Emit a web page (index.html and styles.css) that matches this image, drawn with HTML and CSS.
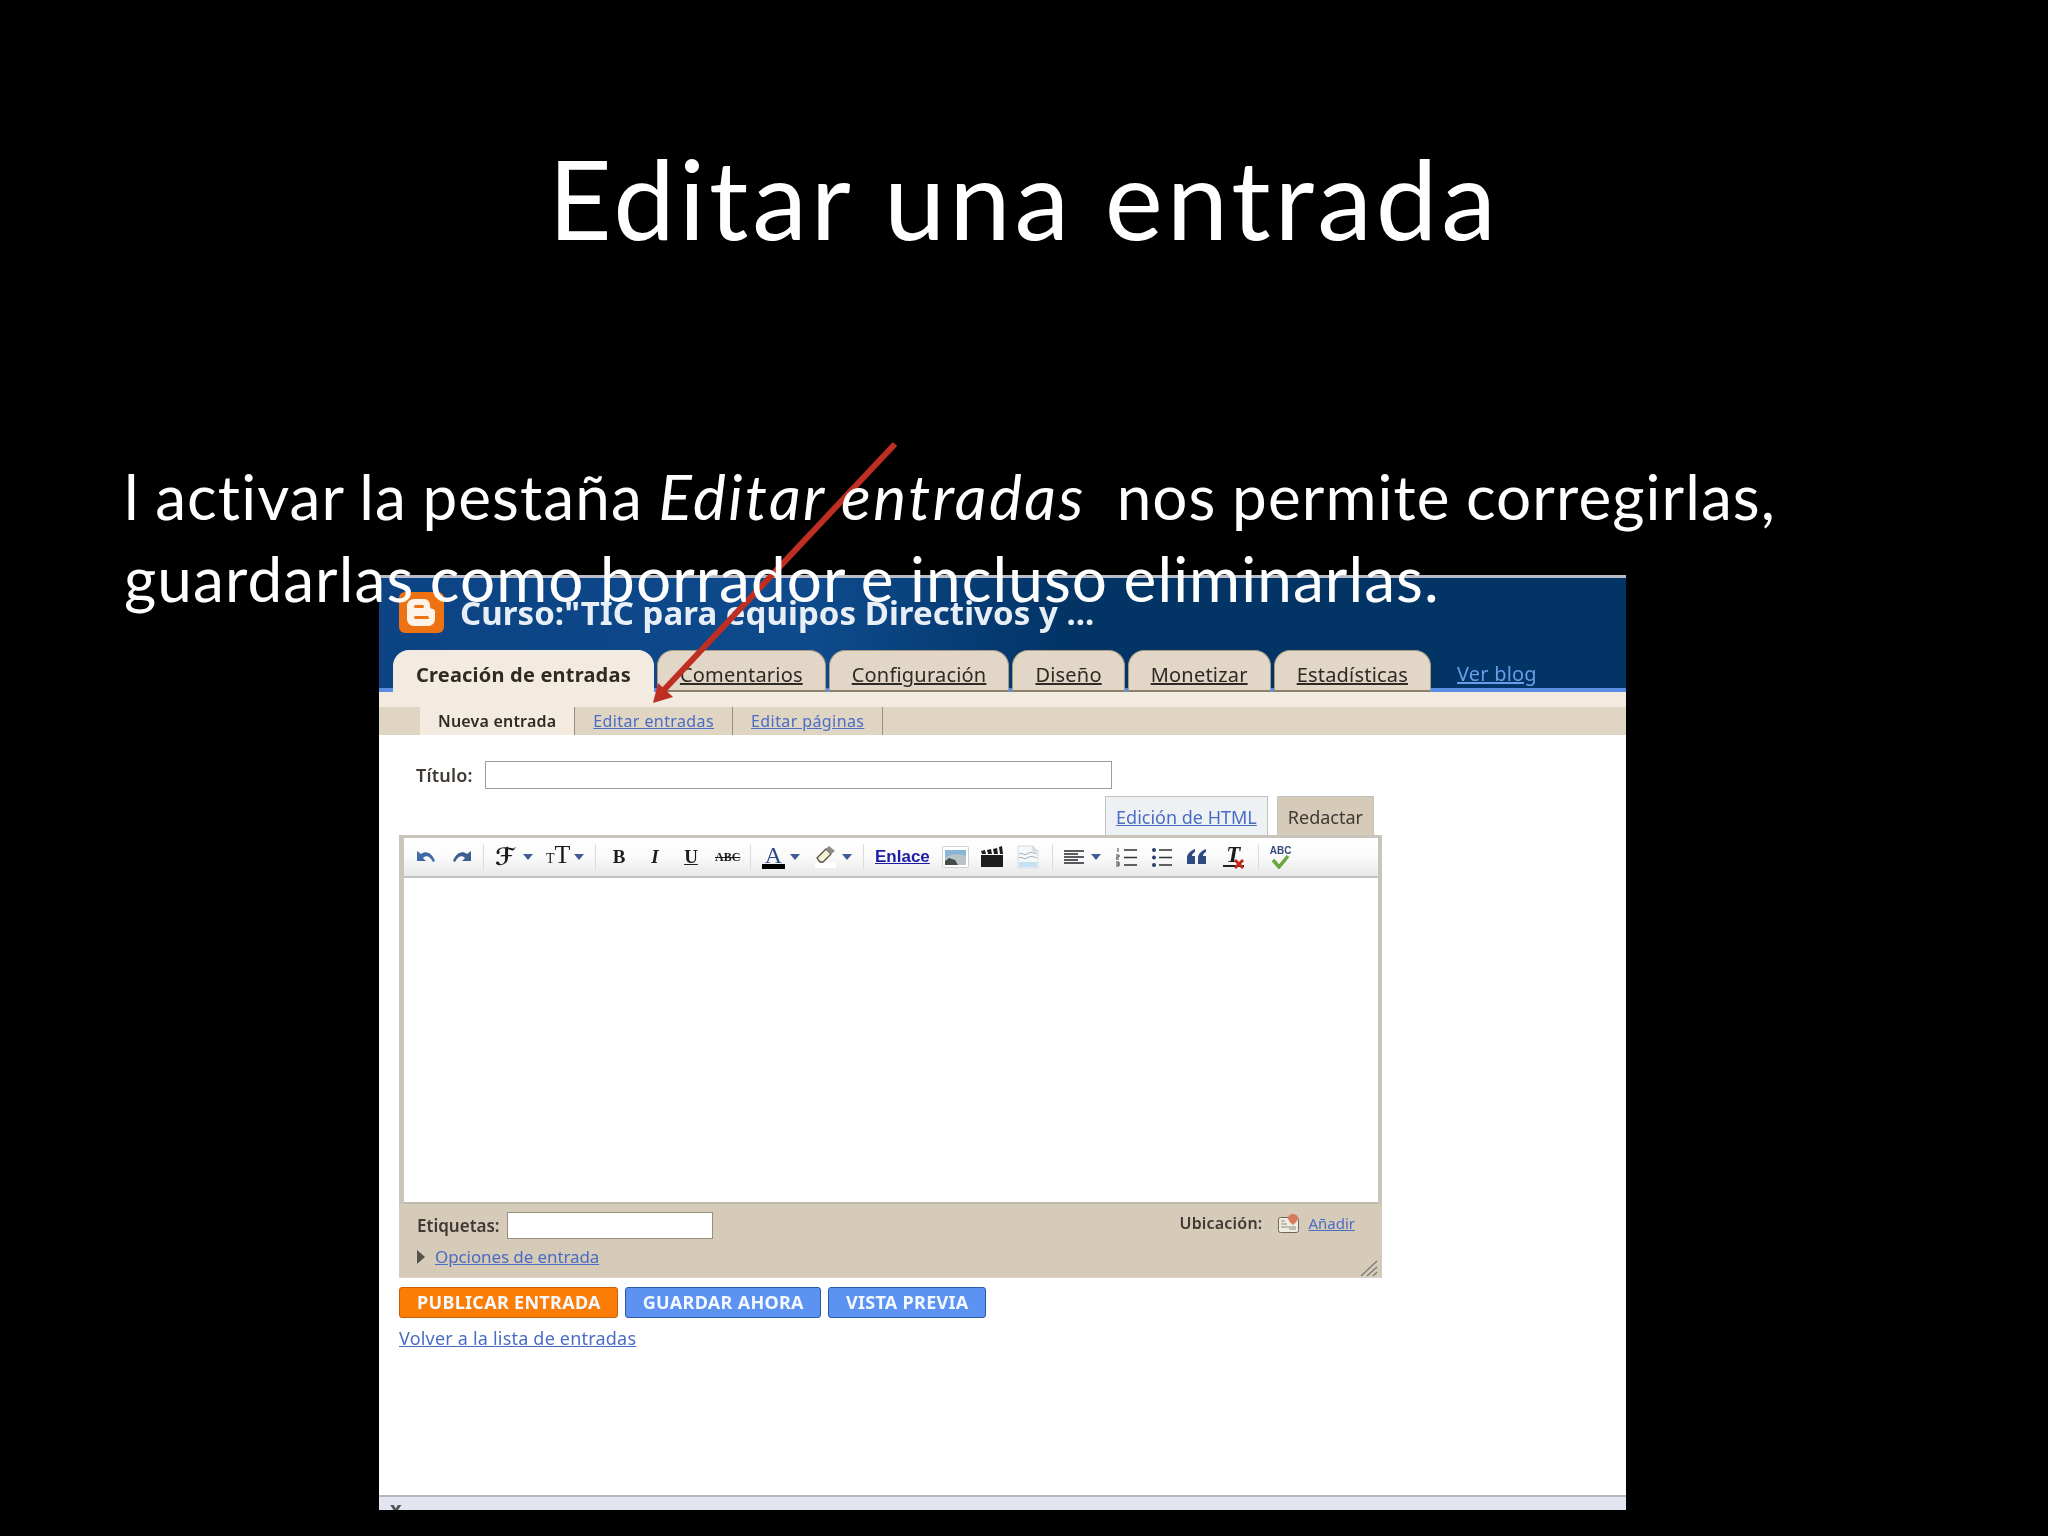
FILE: index.html
```html
<!doctype html>
<html lang="es">
  <head>
    <meta charset="utf-8">
    <title>Editar una entrada</title>
    <link rel="stylesheet" href="styles.css">
  </head>
  <body>
    <div class="slide">
      <h1 class="slideTitle">Editar una entrada</h1>
      <p class="slideText">l activar la pestaña <em>Editar entradas</em>&nbsp; nos permite corregirlas,<br>guardarlas como borrador e incluso eliminarlas.</p>

      <div class="window">
        <div class="masthead">
          <div class="brand">
            <svg class="logo" viewBox="0 0 45 41">
              <rect width="45" height="41" rx="6" fill="#ee7112"/>
              <path d="M15 7h10c4 0 6 3 6 7 0 2 1 3 3 3 1 0 2 1 2 3v7c0 4-3 7-7 7H15c-4 0-7-3-7-7V14c0-4 3-7 7-7z" fill="#fdf3e8"/>
              <rect x="15" y="13" width="10" height="3" rx="1.5" fill="#ee7112"/>
              <rect x="15" y="24" width="15" height="3" rx="1.5" fill="#ee7112"/>
            </svg>
            <span class="blogName">Curso:"TIC para equipos Directivos y ...</span>
          </div>
          <div class="tabs">
            <span class="tab active">Creación de entradas</span>
            <a class="tab">Comentarios</a>
            <a class="tab">Configuración</a>
            <a class="tab">Diseño</a>
            <a class="tab">Monetizar</a>
            <a class="tab">Estadísticas</a>
            <a class="viewBlog">Ver blog</a>
          </div>
        </div>

        <div class="subnav">
          <div class="subtabs">
            <span class="subtab current">Nueva entrada</span>
            <a class="subtab">Editar entradas</a>
            <a class="subtab">Editar páginas</a>
          </div>
        </div>

        <div class="compose">
          <div class="titleRow">
            <label class="fieldLabel titleLabel">Título:</label>
            <div class="titleInput"></div>
          </div>
          <div class="modeTabs">
            <a class="modeTab html">Edición de HTML</a>
            <span class="modeTab write">Redactar</span>
          </div>

          <div class="editor">
            <div class="toolbar">
              <div class="group gapUndo">
                <svg class="icon20" viewBox="0 0 20 14"><path d="M1 1v10h9L7 8c3-3 7-2 10 4l2-1C16 3 10 0 5 4z" fill="#3f6aa8"/></svg>
                <svg class="icon20" viewBox="0 0 20 14"><path d="M19 1v10h-9l3-3C10 5 6 6 3 12l-2-1C4 3 10 0 15 4z" fill="#3c5f8f"/></svg>
              </div>
              <i class="sep"></i>
              <div class="group gapFont">
                <div class="drop"><span class="glyph fontGlyph">ℱ</span><i class="caret"></i></div>
                <div class="drop"><span class="glyph sizeGlyph"><small>T</small>T</span><i class="caret"></i></div>
              </div>
              <i class="sep"></i>
              <div class="group gapStyle">
                <span class="glyph styleGlyph bold">B</span>
                <span class="glyph styleGlyph italic">I</span>
                <span class="glyph styleGlyph under">U</span>
                <span class="glyph styleGlyph strike">ABC</span>
              </div>
              <i class="sep"></i>
              <div class="group gapColor">
                <div class="drop tight"><span class="glyph colorGlyph">A</span><i class="caret"></i></div>
                <div class="drop tight">
                  <svg class="icon22" viewBox="0 0 22 22">
                    <path d="M2 12 11 3l5 5-8 8H5z" fill="#f3f4d8" stroke="#55524a" stroke-width="1.3"/>
                    <path d="M11 3l3-3 6 5-4 3z" fill="#8d8c88"/>
                    <rect y="17" width="21" height="5" fill="#fff"/>
                  </svg>
                  <i class="caret"></i>
                </div>
              </div>
              <i class="sep"></i>
              <div class="group gapInsert">
                <a class="linkBtn">Enlace</a>
                <span class="imageBtn">
                  <svg viewBox="0 0 21 15">
                    <rect width="21" height="15" fill="#88b4d6"/>
                    <path d="M0 8c5-4 12-5 21-2v9H0z" fill="#b8c4c6"/>
                    <path d="M0 11l4-3 6 2 3 5H0z" fill="#454b46"/>
                  </svg>
                </span>
                <svg class="icon22" viewBox="0 0 22 22">
                  <path d="M0 9h22v12H0z" fill="#1d1c1a"/>
                  <path d="M0 5l4-1 1 4H1zM6 4l4-1 1 5H7zM12 3l4-1 1 6h-4zM18 1l3-1 1 8h-3z" fill="#1d1c1a"/>
                </svg>
                <svg class="icon26" viewBox="0 0 26 24">
                  <path d="M3 1h15l5 5v17H3z" fill="#f6f9fb" stroke="#d6dce2"/>
                  <path d="M18 1v5h5" fill="#dfe6ec" stroke="#c6ced6"/>
                  <path d="M4 9c3-2 5 2 8 0s5-2 10 0M4 13c3-2 5 2 8 0s5-2 10 0" fill="none" stroke="#a4acb4"/>
                  <path d="M4 17h18v5H4z" fill="#c4e0f2"/>
                </svg>
              </div>
              <i class="sep"></i>
              <div class="group gapList">
                <div class="drop alignDrop">
                  <svg class="icon20" viewBox="0 0 20 15"><path d="M0 1h20M0 4h14M0 7h20M0 10h14M0 13h20" stroke="#25272b" stroke-width="1.6"/></svg>
                  <i class="caret"></i>
                </div>
                <svg class="icon21" viewBox="0 0 21 19">
                  <path d="M8 2h13M8 9.500h13M8 17h13" stroke="#2f3135" stroke-width="1.6"/>
                  <path d="M2 0v4M0 7h3v2H0v2h3M0 14h3v4H0M0 16h3" fill="none" stroke="#3a3c40"/>
                </svg>
                <svg class="icon20" viewBox="0 0 20 19">
                  <path d="M7 2h13M7 9.500h13M7 17h13" stroke="#2f3135" stroke-width="1.6"/>
                  <circle cx="2" cy="2" r="2" fill="#2c3f68"/><circle cx="2" cy="9.500" r="2" fill="#2c3f68"/><circle cx="2" cy="17" r="2" fill="#2c3f68"/>
                </svg>
                <svg class="icon20" viewBox="0 0 20 16">
                  <path d="M8 0C3 2 0 5 0 9v6h8V7H5c0-2 1-3 3-4zM19 0c-5 2-8 5-8 9v6h8V7h-3c0-2 1-3 3-4z" fill="#2e4a80"/>
                </svg>
                <span class="clearBtn">
                  <span class="glyph clearGlyph">T</span>
                  <svg class="clearX" viewBox="0 0 12 12"><path d="M2 2l8 8M10 2l-8 8" stroke="#c2261c" stroke-width="3"/></svg>
                </span>
              </div>
              <i class="sep"></i>
              <span class="spellBtn">
                <span class="spellText">ABC</span>
                <svg class="spellCheck" viewBox="0 0 20 16"><path d="M3 7l6 7L18 3" fill="none" stroke="#6aa83c" stroke-width="3.500"/></svg>
              </span>
            </div>
            <div class="editBody"></div>
          </div>

          <div class="editorFoot">
            <div class="footRow">
              <label class="fieldLabel">Etiquetas:</label>
              <div class="tagInput"></div>
              <div class="location">
                <span class="fieldLabel locLabel">Ubicación:</span>
                <svg class="mapIcon" viewBox="0 0 21 19">
                  <rect x=".5" y="3.500" width="20" height="15" rx="2" fill="#efece4" stroke="#6d675c"/>
                  <path d="M3 7h4M3 10h6M3 13h15M11 15h7" stroke="#8f8a7e"/>
                  <path d="M15 0c3 0 5 2 5 4 0 3-5 7-5 7s-5-4-5-7c0-2 2-4 5-4z" fill="#d9785a"/>
                </svg>
                <a class="link">Añadir</a>
              </div>
            </div>
            <div class="optionsRow"><i class="expander"></i><a class="link">Opciones de entrada</a></div>
            <svg class="grip" viewBox="0 0 18 17"><path d="M1 16 17 1M7 16 17 7M13 16l4-4" stroke="#7b7a76" stroke-width="1.300"/></svg>
          </div>

          <div class="actions">
            <a class="btn publish">PUBLICAR ENTRADA</a>
            <a class="btn save">GUARDAR AHORA</a>
            <a class="btn preview">VISTA PREVIA</a>
          </div>
          <a class="link backLink">Volver a la lista de entradas</a>
        </div>

        <div class="statusBar"><span class="closeMark">x</span></div>
      </div>

      <svg class="arrow" viewBox="0 0 2048 1536">
        <line x1="895" y1="444" x2="662" y2="692" stroke="#bf2e22" stroke-width="6"/>
        <polygon points="653,703 658,683 673,697" fill="#bf2e22"/>
      </svg>
    </div>
  </body>
</html>
```

FILE: styles.css
```css
html, body {
  margin: 0;
  background: #000;
}

.slide {
  position: relative;
  width: 2048px;
  height: 1536px;
  overflow: hidden;
  background: #000;
  color: #fff;
  font-family: Lato, "Open Sans", sans-serif;
  font-variant-ligatures: none;
}

.slideTitle {
  position: relative;
  z-index: 3;
  margin: 0;
  padding-top: 131px;
  font-size: 110px;
  line-height: 132px;
  font-weight: 400;
  text-align: center;
  letter-spacing: 3.8px;
}

.slideText {
  position: relative;
  z-index: 3;
  margin: 192px 0 0;
  padding-left: 124px;
  font-size: 62px;
  line-height: 82px;
  letter-spacing: 1.1px;
  word-spacing: -1.5px;
  white-space: nowrap;
}

.slideText em {
  letter-spacing: 2.5px;
}

.arrow {
  position: absolute;
  left: 0;
  top: 0;
  z-index: 2;
  width: 2048px;
  height: 1536px;
}

/* screenshot of the blog editor */
.window {
  position: absolute;
  left: 379px;
  top: 575px;
  z-index: 1;
  display: flex;
  flex-direction: column;
  width: 1247px;
  height: 935px;
  background: #fff;
  border-top: 3px solid #b9bdc9;
  box-sizing: border-box;
  color: #3a342c;
  font-family: "Noto Sans", sans-serif;
  font-size: 17px;
  filter: blur(0.5px);
}

a {
  cursor: pointer;
}

.link {
  color: #4a6cc4;
  text-decoration: underline;
}

.masthead {
  background:
    linear-gradient(#5a8ee4, #5a8ee4) left bottom / 100% 4px no-repeat,
    linear-gradient(90deg, #0c4384, #0e4a8c 35%, #023466 55%);
}

.brand {
  display: flex;
  gap: 16px;
  height: 72px;
  box-sizing: border-box;
  padding: 14px 0 0 20px;
}

.logo {
  width: 45px;
  height: 41px;
}

.blogName {
  margin-top: 3px;
  color: #e8eef6;
  font-size: 33px;
  line-height: 36px;
  font-weight: 700;
  letter-spacing: 0.05px;
}

.tabs {
  display: flex;
  gap: 3px;
  height: 42px;
  padding-left: 14px;
}

.tab {
  padding: 11px 22px 0;
  box-sizing: border-box;
  background: #e2d7c6;
  border: 1px solid #a89a84;
  border-bottom: 2px solid #8d7f6a;
  border-radius: 16px 16px 0 0;
  color: #2e2a24;
  font-size: 20px;
  line-height: 26px;
  letter-spacing: 0.2px;
  text-decoration: underline;
}

.tab.active {
  background: #f3ebe0;
  border-color: #f3ebe0;
  font-weight: 700;
  text-decoration: none;
}

.viewBlog {
  margin: 11px 0 0 23px;
  color: #6a9ce8;
  font-size: 20px;
  line-height: 26px;
  letter-spacing: 0.2px;
  text-decoration: underline;
}

.subnav {
  padding-top: 15px;
  background: #f3ebe0;
}

.subtabs {
  display: flex;
  height: 28px;
  padding-left: 41px;
  background: #e0d5c3;
}

.subtab {
  padding: 0 18px;
  border-right: 1px solid #9a8c76;
  color: #4a6cc4;
  font-size: 16px;
  line-height: 28px;
  letter-spacing: 0.4px;
  text-decoration: underline;
}

.subtab.current {
  background: #f3ebe0;
  color: #2e2a24;
  font-weight: 600;
  letter-spacing: 0.2px;
  text-decoration: none;
}

.compose {
  display: flex;
  flex-direction: column;
  padding: 26px 0 0 20px;
}

.titleRow {
  display: flex;
  align-items: center;
  gap: 12px;
  padding-left: 17px;
}

.fieldLabel {
  color: #3f3a33;
  font-size: 17px;
  font-weight: 600;
}

.titleLabel {
  font-size: 18px;
  letter-spacing: 0.2px;
}

.titleInput {
  width: 625px;
  height: 26px;
  background: #fff;
  border: 1px solid #9c9c9c;
}

.modeTabs {
  display: flex;
  justify-content: flex-end;
  gap: 9px;
  width: 975px;
  margin-top: 7px;
}

.modeTab {
  box-sizing: border-box;
  height: 40px;
  padding: 0 10px;
  border: 1px solid #c4c2bc;
  border-bottom: 0;
  font-size: 18px;
  line-height: 40px;
}

.modeTab.html {
  background: #eef1f4;
  color: #4a6cc4;
  text-decoration: underline;
}

.modeTab.write {
  background: #d6cab8;
  color: #3f3a33;
}

.editor {
  box-sizing: border-box;
  width: 983px;
  margin-top: -1px;
  background: #fff;
  border: solid #c9c5bb;
  border-width: 3px 4px 0 5px;
}

.toolbar {
  display: flex;
  align-items: center;
  height: 38px;
  padding-left: 12px;
  background: linear-gradient(#fff, #fafafa 50%, #e8e8e8);
  border-bottom: 2px solid #c2c2c2;
}

.group {
  display: flex;
  align-items: center;
}

.gapUndo { gap: 16px; }
.gapFont { gap: 13px; }
.gapStyle { gap: 12px; }
.gapColor { gap: 15px; }
.gapInsert { gap: 12px; }
.gapList { gap: 15px; }

.drop {
  display: flex;
  align-items: center;
  gap: 8px;
}

.drop.tight {
  gap: 5px;
}

.drop.alignDrop {
  gap: 7px;
}

.sep {
  width: 1px;
  height: 26px;
  margin: 0 11px;
  background: #dcdcdc;
}

.caret {
  width: 0;
  height: 0;
  border: 5px solid transparent;
  border-top: 6px solid #3f5a94;
  border-bottom: 0;
}

.icon20 { width: 20px; }
.icon21 { width: 21px; }
.icon22 { width: 22px; height: 22px; }
.icon26 { width: 26px; height: 24px; }

.glyph {
  font-family: "Liberation Serif", serif;
  color: #1c1c1c;
}

.fontGlyph {
  width: 20px;
  font-family: "DejaVu Sans", serif;
  font-size: 24px;
  line-height: 28px;
  font-weight: 700;
  text-align: center;
}

.sizeGlyph {
  width: 20px;
  font-size: 26px;
  line-height: 28px;
  white-space: nowrap;
}

.sizeGlyph small {
  font-size: 14px;
}

.styleGlyph {
  width: 24px;
  font-size: 19px;
  line-height: 24px;
  font-weight: 700;
  text-align: center;
}

.styleGlyph.italic { font-style: italic; }
.styleGlyph.under { text-decoration: underline; }
.styleGlyph.strike {
  font-size: 12px;
  text-decoration: line-through;
}

.colorGlyph {
  width: 23px;
  height: 18px;
  color: #2e4a8c;
  font-size: 24px;
  line-height: 18px;
  text-align: center;
  border-bottom: 5px solid #000;
}

.linkBtn {
  color: #1c1ca8;
  font-family: "Liberation Sans", sans-serif;
  font-size: 17px;
  font-weight: 700;
  text-decoration: underline;
}

.imageBtn {
  display: flex;
  align-items: center;
  justify-content: center;
  box-sizing: border-box;
  width: 27px;
  height: 22px;
  background: #fff;
  border: 1px solid #cdd1d8;
  border-radius: 2px;
}

.imageBtn svg {
  width: 21px;
}

.clearBtn {
  position: relative;
  width: 21px;
  height: 24px;
  margin: 0 3px 0 1px;
}

.clearGlyph {
  display: block;
  font-size: 23px;
  line-height: 20px;
  font-style: italic;
  font-weight: 700;
  text-align: center;
  border-bottom: 2px solid #222;
}

.clearX {
  position: absolute;
  right: -1px;
  bottom: -1px;
  width: 12px;
}

.spellBtn {
  position: relative;
  width: 20px;
  height: 24px;
}

.spellText {
  display: block;
  color: #354c7a;
  font-family: "Liberation Sans", sans-serif;
  font-size: 10px;
  line-height: 12px;
  font-weight: 700;
  text-align: center;
}

.spellCheck {
  position: absolute;
  left: 0;
  top: 8px;
  width: 20px;
}

.editBody {
  height: 324px;
  background: #fff;
  border-bottom: 2px solid #bdb9ae;
}

.editorFoot {
  position: relative;
  box-sizing: border-box;
  width: 983px;
  height: 74px;
  padding: 8px 0 0 18px;
  background: #d6cab8;
  border-bottom: 1px solid #d8d4cc;
}

.footRow {
  display: flex;
  align-items: center;
  gap: 7px;
  height: 27px;
}

.tagInput {
  width: 204px;
  height: 25px;
  background: #fff;
  border: 1px solid #96907f;
}

.location {
  display: flex;
  align-items: center;
  margin: -5px 27px 0 auto;
  gap: 9px;
  font-size: 15px;
}

.locLabel {
  margin-right: 7px;
  font-size: 16px;
  letter-spacing: 0.2px;
}

.mapIcon {
  width: 21px;
}

.optionsRow {
  display: flex;
  align-items: center;
  gap: 10px;
  margin-top: 6px;
  font-size: 17px;
  letter-spacing: -0.1px;
}

.expander {
  width: 0;
  height: 0;
  border: 7px solid transparent;
  border-left: 8px solid #55524a;
  border-right: 0;
}

.grip {
  position: absolute;
  right: 4px;
  bottom: 0;
  width: 18px;
  height: 17px;
}

.actions {
  display: flex;
  gap: 7px;
  margin-top: 9px;
}

.btn {
  box-sizing: border-box;
  height: 31px;
  padding: 0 16px 0 17px;
  border: 1px solid #2a5aa8;
  border-radius: 3px;
  color: #f4f8ff;
  font-size: 18px;
  line-height: 29px;
  font-weight: 700;
  letter-spacing: 0.3px;
}

.btn.publish {
  background: #fb7d06;
  border-color: #c75f0c;
}

.btn.save,
.btn.preview {
  background: #5c92f2;
}

.backLink {
  align-self: flex-start;
  margin-top: 8px;
  font-size: 18px;
  letter-spacing: 0.2px;
}

.statusBar {
  position: relative;
  box-sizing: border-box;
  height: 15px;
  margin-top: auto;
  overflow: hidden;
  background: #e3e6f1;
  border-top: 2px solid #b6b8be;
}

.closeMark {
  position: absolute;
  left: 11px;
  top: 2px;
  color: #555;
  font-size: 20px;
  font-weight: 700;
  line-height: 20px;
}
```
